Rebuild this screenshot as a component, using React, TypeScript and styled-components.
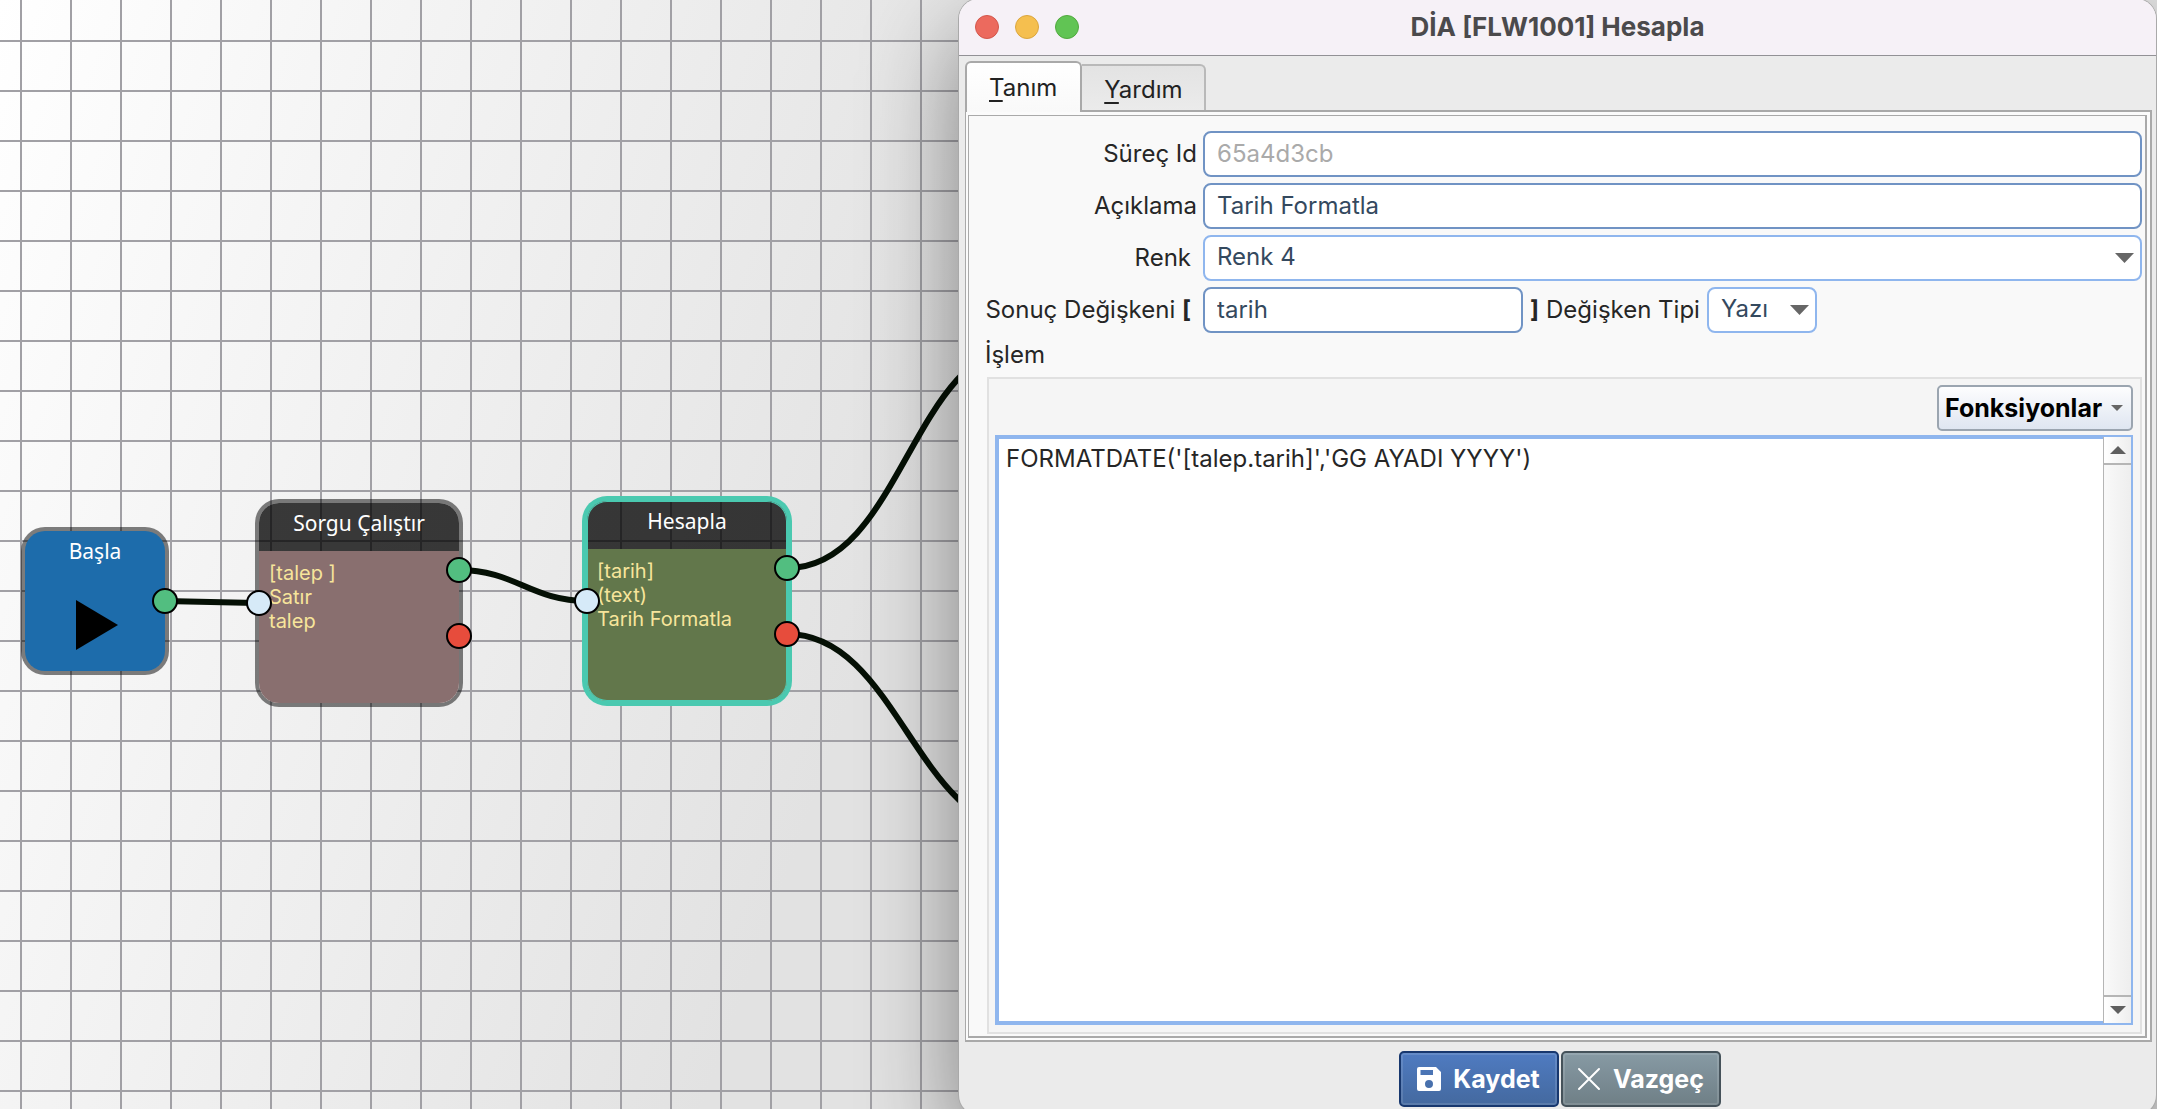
import React from "react";
import styled, { createGlobalStyle, css } from "styled-components";

const GlobalStyle = createGlobalStyle`
  *, *::before, *::after { box-sizing: border-box; }
  body {
    margin: 0;
    font-family: Inter, "Liberation Sans", sans-serif;
    font-size: 24px;
    line-height: 28px;
    color: #262626;
  }
  button, input, select, textarea { font: inherit; margin: 0; }
`;

/* ---------- flow canvas ---------- */

const Desktop = styled.div`
  display: flex;
  height: 100vh;
  overflow: hidden;
  background:
    linear-gradient(#a1a0a5 2px, transparent 2px) 0 40px / 50px 50px,
    linear-gradient(90deg, #a1a0a5 2px, transparent 2px) 20px 0 / 50px 50px,
    linear-gradient(110deg, #ffffff 0, #f5f5f5 350px, #ececec 680px, #e2e2e2 1040px);
`;

const Canvas = styled.main`
  position: relative;
  flex: 0 0 959px;
`;

const Edges = styled.svg`
  position: absolute;
  inset: 0;
  width: 100%;
  height: 100%;
  fill: none;
  stroke: #051005;
  stroke-width: 6;
`;

const Node = styled.section<{ $x: number; $y: number; $size: number; $color: string; $header?: boolean; $selected?: boolean }>`
  position: absolute;
  left: ${(p) => p.$x}px;
  top: ${(p) => p.$y}px;
  width: ${(p) => p.$size}px;
  height: ${(p) => p.$size}px;
  border-radius: 20px;
  background: ${(p) =>
    p.$header ? `linear-gradient(rgba(0, 0, 0, 0.77) 48px, ${p.$color} 48px)` : p.$color};
  box-shadow: 0 0 0 4px rgba(0, 0, 0, 0.5);
  ${(p) =>
    p.$selected &&
    css`
      box-shadow: 0 0 0 5px #4ac9b0, inset 0 0 0 1px #4ac9b0;
    `}
`;

const NodeTitle = styled.h2`
  margin: 0;
  height: 48px;
  padding-top: 5px;
  font: 400 21px/30px "Noto Sans", "Open Sans", sans-serif;
  text-align: center;
  color: #fff;
`;

const NodeText = styled.p`
  margin: 0;
  padding: 10px;
  font-size: 20px;
  line-height: 24px;
  color: #f7e59b;
`;

const PlayIcon = styled.svg`
  display: block;
  width: 42px;
  height: 50px;
  margin: 21px 0 0 51px;
`;

const portColors = { ok: "#52be80", fail: "#e74c3c", input: "#d6eaf8" };

const Port = styled.span<{ $kind: keyof typeof portColors; $side: "left" | "right"; $y: number }>`
  position: absolute;
  ${(p) => p.$side}: -13px;
  top: ${(p) => p.$y - 13}px;
  width: 26px;
  height: 26px;
  border: 2px solid #000;
  border-radius: 50%;
  background: ${(p) => portColors[p.$kind]};
`;

/* ---------- dialog window ---------- */

const Dialog = styled.section`
  position: relative;
  flex: 1;
  min-width: 0;
  display: flex;
  flex-direction: column;
  margin: -1px 1px -6px 0;
  padding-bottom: 8px;
  border-radius: 20px;
  background: #ebebeb;
  box-shadow: 0 0 0 1px #a9a9a9, 0 36px 96px rgba(0, 0, 0, 0.45);
`;

const TitleBar = styled.header`
  display: grid;
  grid-template-columns: 1fr auto 1fr;
  align-items: center;
  height: 57px;
  padding: 0 16px;
  border-bottom: 1px solid #929196;
  border-radius: 20px 20px 0 0;
  background: #f6f1f7;
`;

const Lights = styled.div`
  display: flex;
  gap: 16px;
`;

const Light = styled.button<{ $fill: string; $edge: string }>`
  width: 24px;
  height: 24px;
  padding: 0;
  border: 1px solid ${(p) => p.$edge};
  border-radius: 50%;
  background: ${(p) => p.$fill};
`;

const WindowTitle = styled.h1`
  margin: 0;
  font-size: 26px;
  line-height: 28px;
  font-weight: 700;
  color: #4b4a4c;
`;

const Tabs = styled.div`
  position: relative;
  z-index: 1;
  display: flex;
  align-items: flex-end;
  height: 56px;
  margin: 0 0 -2px 6px;
`;

const Tab = styled.button<{ $active?: boolean }>`
  height: 46px;
  margin-bottom: 2px;
  padding: 4px 22px 0;
  border: 2px solid #b9b9b9;
  border-left: 0;
  border-bottom: 0;
  border-radius: 0 6px 0 0;
  background: linear-gradient(#e3e3e3, #ebebeb);
  color: #222;
  ${(p) =>
    p.$active &&
    css`
      height: 51px;
      margin-bottom: 0;
      padding: 0 23px 0 22px;
      border: 2px solid #a9a9a9;
      border-bottom: 0;
      border-radius: 6px 6px 0 0;
      background: linear-gradient(#fff, #f9f9f9);
    `}
`;

const Mnemonic = styled.span`
  text-decoration: underline;
  text-decoration-thickness: 2px;
  text-underline-offset: 4px;
`;

const Pane = styled.div`
  flex: 1;
  display: flex;
  min-height: 0;
  margin: 0 4px 0 6px;
  padding: 3px 3px 2px 2px;
  border: 2px solid #a9a9a9;
  border-left-width: 1px;
  background: #fbfbfb;
`;

const Form = styled.form`
  flex: 1;
  display: flex;
  flex-direction: column;
  min-width: 0;
  padding: 15px 3px 2px 16px;
  border: 1px solid #a9a9a9;
  border-right-width: 2px;
  border-bottom-width: 2px;
  background: #f9f9f9;
`;

const Fields = styled.div`
  display: grid;
  grid-template-columns: 212px 1fr;
  gap: 6px;
`;

const Label = styled.label<{ $inset?: boolean }>`
  align-self: center;
  justify-self: end;
  white-space: nowrap;
  padding-right: ${(p) => (p.$inset ? 6 : 0)}px;
`;

const field = css`
  width: 100%;
  height: 46px;
  padding: 0 12px 2px;
  border: 2px solid #7093c4;
  border-radius: 8px;
  background: #fff;
  color: #34495e;
  outline: none;
`;

const TextBox = styled.input`
  ${field}
  &:disabled {
    color: #aaa;
    -webkit-text-fill-color: #aaa;
  }
`;

const SelectWrap = styled.div`
  position: relative;
`;

const Select = styled.select`
  ${field}
  appearance: none;
  border-color: #8fb6ee;
`;

const SelectArrow = styled.svg`
  position: absolute;
  right: 8px;
  top: 18px;
  width: 19px;
  height: 10px;
  fill: #666;
  pointer-events: none;
`;

const ResultRow = styled.div`
  display: grid;
  grid-template-columns: 320px auto auto 110px;
  justify-content: start;
  align-items: center;
  column-gap: 7px;
`;

const Bracket = styled.b`
  font-weight: 700;
`;

const SectionLabel = styled.label`
  margin: 8px 0;
`;

const Group = styled.div`
  flex: 1;
  display: flex;
  flex-direction: column;
  min-height: 0;
  margin-left: 2px;
  padding: 6px 7px 7px 6px;
  border: 2px solid #e1e1e1;
  background: #f5f5f5;
`;

const MenuButton = styled.button`
  align-self: flex-end;
  display: flex;
  align-items: center;
  justify-content: space-between;
  width: 196px;
  height: 46px;
  margin-bottom: 4px;
  padding: 0 8px 0 6px;
  border: 2px solid #9ba5b0;
  border-radius: 5px;
  background: linear-gradient(#fdfdfe, #dfe6f1);
  font-size: 25px;
  font-weight: 700;
  color: #000;
`;

const SmallArrow = styled.svg`
  width: 12px;
  height: 6px;
  fill: #666;
`;

const Editor = styled.div`
  flex: 1;
  display: flex;
  min-height: 0;
  border: 2px solid #8fb6ee;
  background: #fff;
`;

const Code = styled.textarea`
  flex: 1;
  min-width: 0;
  padding: 6px 7px;
  border: 2px solid #8fb6ee;
  border-right: 0;
  outline: none;
  resize: none;
  background: #fff;
  color: #262626;
`;

const ScrollTrack = styled.div`
  display: flex;
  flex-direction: column;
  justify-content: space-between;
  width: 28px;
  border-left: 1px solid #b5b5b5;
  background: linear-gradient(90deg, #f9f9f9, #eee);
`;

const ScrollButton = styled.button<{ $end?: boolean }>`
  display: grid;
  place-items: center;
  height: 28px;
  padding: 0;
  border: 0 solid #b5b5b5;
  border-width: ${(p) => (p.$end ? "2px 0 0" : "0 0 2px")};
  background: linear-gradient(90deg, #fff, #eee);
`;

const ScrollArrow = styled.svg`
  width: 16px;
  height: 8px;
  fill: #5f5f5f;
`;

const Footer = styled.footer`
  display: flex;
  justify-content: center;
  gap: 2px;
  margin-top: 9px;
  padding-left: 4px;
`;

const ActionButton = styled.button<{ $primary?: boolean }>`
  display: flex;
  align-items: center;
  justify-content: center;
  gap: 12px;
  width: 160px;
  height: 56px;
  padding: 0;
  border: 2px solid ${(p) => (p.$primary ? "#17376e" : "#45525a")};
  border-radius: 5px;
  background: ${(p) => (p.$primary ? "linear-gradient(#4f7bc1, #44699f)" : "linear-gradient(#879aa4, #6f7f86)")};
  box-shadow: inset 0 0 0 2px rgba(255, 255, 255, 0.12);
  font-size: 25px;
  font-weight: 700;
  color: #fff;
`;

const ActionIcon = styled.svg`
  width: 24px;
  height: 24px;
`;

const DownArrow = () => (
  <SelectArrow viewBox="0 0 19 10" aria-hidden="true">
    <path d="M0 0H19L9.500 10Z" />
  </SelectArrow>
);

export default function App() {
  return (
    <Desktop>
      <GlobalStyle />
      <Canvas>
        <Edges aria-hidden="true">
          <path d="M165 601 L259 603" />
          <path d="M459 570 C515 570 531 601 587 601" />
          <path d="M787 568 C902 568 912 345 1027 345" />
          <path d="M787 634 C897 634 917 830 1027 830" />
        </Edges>

        <Node $x={25} $y={531} $size={140} $color="#1d6cab">
          <NodeTitle>Başla</NodeTitle>
          <PlayIcon viewBox="0 0 42 50" aria-hidden="true">
            <path d="M0 0L42 25L0 50Z" />
          </PlayIcon>
          <Port $kind="ok" $side="right" $y={70} />
        </Node>

        <Node $x={259} $y={503} $size={200} $color="#896f6f" $header>
          <NodeTitle>Sorgu Çalıştır</NodeTitle>
          <NodeText>
            [talep ]<br />
            Satır
            <br />
            talep
          </NodeText>
          <Port $kind="input" $side="left" $y={100} />
          <Port $kind="ok" $side="right" $y={67} />
          <Port $kind="fail" $side="right" $y={133} />
        </Node>

        <Node $x={587} $y={501} $size={200} $color="#62774b" $header $selected>
          <NodeTitle>Hesapla</NodeTitle>
          <NodeText>
            [tarih]
            <br />
            (text)
            <br />
            Tarih Formatla
          </NodeText>
          <Port $kind="input" $side="left" $y={100} />
          <Port $kind="ok" $side="right" $y={67} />
          <Port $kind="fail" $side="right" $y={133} />
        </Node>
      </Canvas>

      <Dialog role="dialog" aria-labelledby="window-title">
        <TitleBar>
          <Lights>
            <Light type="button" aria-label="Kapat" $fill="#ec6a5e" $edge="#d3574c" />
            <Light type="button" aria-label="Küçült" $fill="#f5bf4f" $edge="#dba63e" />
            <Light type="button" aria-label="Büyüt" $fill="#61c454" $edge="#51a93e" />
          </Lights>
          <WindowTitle id="window-title">DİA [FLW1001] Hesapla</WindowTitle>
        </TitleBar>

        <Tabs role="tablist">
          <Tab type="button" role="tab" aria-selected="true" $active>
            <Mnemonic>T</Mnemonic>anım
          </Tab>
          <Tab type="button" role="tab" aria-selected="false">
            <Mnemonic>Y</Mnemonic>ardım
          </Tab>
        </Tabs>

        <Pane role="tabpanel">
          <Form id="definition" onSubmit={(e) => e.preventDefault()}>
            <Fields>
              <Label htmlFor="process">Süreç Id</Label>
              <TextBox id="process" defaultValue="65a4d3cb" disabled />

              <Label htmlFor="note">Açıklama</Label>
              <TextBox id="note" defaultValue="Tarih Formatla" />

              <Label htmlFor="color" $inset>
                Renk
              </Label>
              <SelectWrap>
                <Select id="color" defaultValue="Renk 4">
                  <option>Renk 4</option>
                </Select>
                <DownArrow />
              </SelectWrap>

              <Label htmlFor="result" $inset>
                Sonuç Değişkeni <Bracket>[</Bracket>
              </Label>
              <ResultRow>
                <TextBox id="result" defaultValue="tarih" />
                <Bracket>]</Bracket>
                <Label htmlFor="kind">Değişken Tipi</Label>
                <SelectWrap>
                  <Select id="kind" defaultValue="Yazı">
                    <option>Yazı</option>
                  </Select>
                  <DownArrow />
                </SelectWrap>
              </ResultRow>
            </Fields>

            <SectionLabel htmlFor="formula">İşlem</SectionLabel>
            <Group>
              <MenuButton type="button">
                Fonksiyonlar
                <SmallArrow viewBox="0 0 12 6" aria-hidden="true">
                  <path d="M0 0H12L6 6Z" />
                </SmallArrow>
              </MenuButton>
              <Editor>
                <Code id="formula" spellCheck={false} defaultValue="FORMATDATE('[talep.tarih]','GG AYADI YYYY')" />
                <ScrollTrack>
                  <ScrollButton type="button" aria-label="Yukarı">
                    <ScrollArrow viewBox="0 0 16 8" aria-hidden="true">
                      <path d="M0 8L8 0L16 8Z" />
                    </ScrollArrow>
                  </ScrollButton>
                  <ScrollButton type="button" aria-label="Aşağı" $end>
                    <ScrollArrow viewBox="0 0 16 8" aria-hidden="true">
                      <path d="M0 0H16L8 8Z" />
                    </ScrollArrow>
                  </ScrollButton>
                </ScrollTrack>
              </Editor>
            </Group>
          </Form>
        </Pane>

        <Footer>
          <ActionButton type="submit" form="definition" $primary>
            <ActionIcon viewBox="0 0 24 24" aria-hidden="true">
              <path
                fill="#fff"
                fillRule="evenodd"
                d="M2 0H19L24 5V22Q24 24 22 24H2Q0 24 0 22V2Q0 0 2 0ZM3.500 3V8H16V3ZM12 13A4 4 0 1 0 12 21A4 4 0 1 0 12 13Z"
              />
            </ActionIcon>
            Kaydet
          </ActionButton>
          <ActionButton type="button">
            <ActionIcon viewBox="0 0 24 24" aria-hidden="true">
              <path d="M2 2L22 22M22 2L2 22" stroke="#fff" strokeWidth="2" strokeLinecap="round" />
            </ActionIcon>
            Vazgeç
          </ActionButton>
        </Footer>
      </Dialog>
    </Desktop>
  );
}
